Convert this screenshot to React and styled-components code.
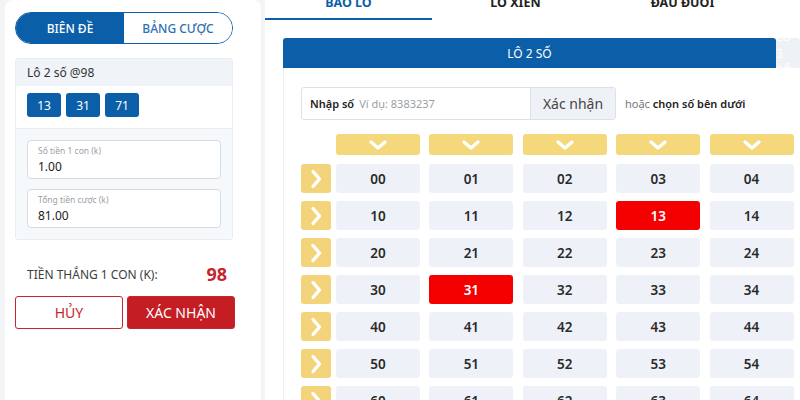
import React from "react";
import styled, { createGlobalStyle } from "styled-components";

const GlobalStyle = createGlobalStyle`
  html, body {
    margin: 0;
    padding: 0;
    background: #f3f4f6;
    font-family: "Noto Sans", "Open Sans", sans-serif;
    overflow: hidden;
  }
`;

/* PAGE */
const Page = styled.div`
  display: flex;
  gap: 4px;
  width: 800px;
  height: 400px;
  padding-left: 5px;
  box-sizing: border-box;
  overflow: hidden;
`;

/* LEFT CARD */
const SideCard = styled.div`
  width: 256px;
  flex: none;
  background: #fff;
  border-radius: 8px 8px 0 0;
  padding: 12px 28px 0 10px;
  box-sizing: border-box;
`;

const Toggle = styled.div`
  display: flex;
  height: 32px;
  border: 1px solid #0b5ea8;
  border-radius: 16px;
  overflow: hidden;
  box-sizing: border-box;
`;

const ToggleItem = styled.div`
  flex: 1;
  display: flex;
  align-items: center;
  justify-content: center;
  font-size: 12px;
  font-weight: 500;
  background: ${(p) => (p.$active ? "#0b5ea8" : "#fff")};
  color: ${(p) => (p.$active ? "#fff" : "#2f6fb0")};
`;

const BetBox = styled.div`
  margin-top: 14px;
  border: 1px solid #e9edf2;
  border-radius: 3px;
`;

const BetHead = styled.div`
  height: 27px;
  display: flex;
  align-items: center;
  padding-left: 11px;
  background: #f0f3f7;
  font-size: 12px;
  color: #333;
`;

const ChipRow = styled.div`
  display: flex;
  gap: 5px;
  padding: 7px 11px 11px;
  border-bottom: 1px solid #e9edf2;
`;

const Chip = styled.div`
  width: 34px;
  height: 24px;
  display: flex;
  align-items: center;
  justify-content: center;
  background: #0b5ea8;
  color: #fff;
  font-size: 12px;
  border-radius: 3px;
`;

const FieldArea = styled.div`
  background: #f6f9fc;
  padding: 11px 11px 11px;
  display: flex;
  flex-direction: column;
  gap: 10px;
`;

const Field = styled.div`
  height: 39px;
  background: #fff;
  border: 1px solid #d7dce3;
  border-radius: 4px;
  padding: 4px 10px 0;
  box-sizing: border-box;
`;

const FieldLabel = styled.div`
  font-size: 8.5px;
  color: #9aa0a8;
  line-height: 11px;
`;

const FieldValue = styled.div`
  font-size: 12px;
  color: #222;
  line-height: 18px;
  margin-top: 2px;
`;

const WinRow = styled.div`
  display: flex;
  justify-content: space-between;
  align-items: center;
  padding: 0 6px 0 12px;
  margin-top: 23px;
  height: 22px;
`;

const WinLabel = styled.div`
  font-size: 12px;
  color: #3c3c3c;
`;

const WinValue = styled.div`
  font-size: 18px;
  font-weight: 700;
  color: #c1272d;
`;

const ButtonRow = styled.div`
  display: flex;
  gap: 4px;
  margin-top: 11px;
  margin-right: -2px;
`;

const ActionButton = styled.button`
  flex: 1;
  height: 33px;
  border-radius: 3px;
  font-family: inherit;
  font-size: 14px;
  border: 1px solid #c1272d;
  background: ${(p) => (p.$primary ? "#c41e24" : "#fff")};
  color: ${(p) => (p.$primary ? "#fff" : "#c1272d")};
`;

/* RIGHT CARD */
const MainCard = styled.div`
  flex: 1;
  background: #fff;
  overflow: hidden;
`;

const TabBar = styled.div`
  display: flex;
  height: 20px;
`;

const Tab = styled.div`
  width: 167px;
  flex: none;
  display: flex;
  align-items: flex-end;
  justify-content: center;
  padding-bottom: 9px;
  box-sizing: border-box;
  font-size: 12.5px;
  font-weight: 700;
  line-height: 13px;
  color: ${(p) => (p.$active ? "#0b5ea8" : "#222")};
  border-bottom: 2px solid ${(p) => (p.$active ? "#0b5ea8" : "transparent")};
`;

const Board = styled.div`
  margin: 18px 0 0 18px;
`;

const SubTabs = styled.div`
  display: flex;
  height: 30px;
`;

const SubTab = styled.div`
  width: ${(p) => (p.$active ? "493px" : "auto")};
  flex: ${(p) => (p.$active ? "none" : "1")};
  display: flex;
  align-items: center;
  justify-content: center;
  font-size: 12px;
  border-radius: 3px 3px 0 0;
  background: ${(p) => (p.$active ? "#0b5ea8" : "#eef1f6")};
  color: #fff;
`;

const BoardBody = styled.div`
  border-left: 1px solid #eceef2;
  padding: 19px 0 0 17px;
`;

const InputRow = styled.div`
  display: flex;
  align-items: center;
  gap: 9px;
`;

const InputGroup = styled.div`
  width: 315px;
  height: 33px;
  display: flex;
  border: 1px solid #dde1e7;
  border-radius: 3px;
  box-sizing: border-box;
  overflow: hidden;
`;

const InputText = styled.div`
  flex: 1;
  display: flex;
  align-items: center;
  gap: 5px;
  padding-left: 8px;
  font-size: 11px;
`;

const InputLabel = styled.span`
  color: #222;
  font-weight: 600;
`;

const Placeholder = styled.span`
  color: #9a9fa6;
`;

const InputButton = styled.div`
  width: 84px;
  display: flex;
  align-items: center;
  justify-content: center;
  background: #eef1f6;
  border-left: 1px solid #dde1e7;
  font-size: 14px;
  color: #444;
`;

const Hint = styled.div`
  font-size: 11px;
  color: #222;
  font-weight: 600;

  span {
    color: #777;
    font-weight: 400;
  }
`;

/* first track is narrower than the arrow, so the arrow runs into the gap */
const NumberGrid = styled.div`
  display: grid;
  grid-template-columns: 25.6px repeat(5, 84px);
  column-gap: 9.4px;
  row-gap: 8px;
  margin-top: 14px;
`;

const ColArrow = styled.div`
  height: 21px;
  background: #f5d77c;
  border-radius: 3px;
  display: flex;
  align-items: center;
  justify-content: center;
  margin-bottom: 1px;
`;

const RowArrow = styled.div`
  width: 30px;
  height: 29px;
  background: #f3d47a;
  border-radius: 3px;
  display: flex;
  align-items: center;
  justify-content: center;
`;

const Cell = styled.div`
  height: 29px;
  border-radius: 3px;
  display: flex;
  align-items: center;
  justify-content: center;
  font-size: 13.5px;
  font-weight: 600;
  background: ${(p) => (p.$on ? "#f50000" : "#eef2f8")};
  color: ${(p) => (p.$on ? "#fff" : "#2a2a2a")};
`;

const Chevron = ({ dir }) =>
  dir === "down" ? (
    <svg width="22" height="14" viewBox="0 0 22 14" fill="none" stroke="#fff" strokeWidth="3.4" strokeLinecap="round" strokeLinejoin="round">
      <path d="M4 4l7 6 7-6" />
    </svg>
  ) : (
    <svg width="14" height="22" viewBox="0 0 14 22" fill="none" stroke="#fff" strokeWidth="3.4" strokeLinecap="round" strokeLinejoin="round">
      <path d="M4 3.5l6.5 7.5-6.5 7.5" />
    </svg>
  );

const selected = ["13", "31"];

export default function App() {
  const rows = [0, 1, 2, 3, 4, 5, 6, 7];
  return (
    <>
      <GlobalStyle />
      <Page>
        <SideCard>
          <Toggle>
            <ToggleItem $active>BIÊN ĐỀ</ToggleItem>
            <ToggleItem>BẢNG CƯỢC</ToggleItem>
          </Toggle>
          <BetBox>
            <BetHead>Lô 2 số @98</BetHead>
            <ChipRow>
              <Chip>13</Chip>
              <Chip>31</Chip>
              <Chip>71</Chip>
            </ChipRow>
            <FieldArea>
              <Field>
                <FieldLabel>Số tiền 1 con (k)</FieldLabel>
                <FieldValue>1.00</FieldValue>
              </Field>
              <Field>
                <FieldLabel>Tổng tiền cược (k)</FieldLabel>
                <FieldValue>81.00</FieldValue>
              </Field>
            </FieldArea>
          </BetBox>
          <WinRow>
            <WinLabel>TIỀN THẮNG 1 CON (K):</WinLabel>
            <WinValue>98</WinValue>
          </WinRow>
          <ButtonRow>
            <ActionButton>HỦY</ActionButton>
            <ActionButton $primary>XÁC NHẬN</ActionButton>
          </ButtonRow>
        </SideCard>

        <MainCard>
          <TabBar>
            <Tab $active>BAO LÔ</Tab>
            <Tab>LÔ XIÊN</Tab>
            <Tab>ĐẦU ĐUÔI</Tab>
          </TabBar>
          <Board>
            <SubTabs>
              <SubTab $active>LÔ 2 SỐ</SubTab>
              <SubTab>LÔ 3 SỐ</SubTab>
            </SubTabs>
            <BoardBody>
              <InputRow>
                <InputGroup>
                  <InputText>
                    <InputLabel>Nhập số</InputLabel>
                    <Placeholder>Ví dụ: 8383237</Placeholder>
                  </InputText>
                  <InputButton>Xác nhận</InputButton>
                </InputGroup>
                <Hint>
                  <span>hoặc</span> chọn số bên dưới
                </Hint>
              </InputRow>
              <NumberGrid>
                <div />
                {[0, 1, 2, 3, 4].map((c) => (
                  <ColArrow key={"c" + c}>
                    <Chevron dir="down" />
                  </ColArrow>
                ))}
                {rows.map((r) => (
                  <React.Fragment key={r}>
                    <RowArrow>
                      <Chevron dir="right" />
                    </RowArrow>
                    {[0, 1, 2, 3, 4].map((c) => {
                      const n = `${r}${c}`;
                      return (
                        <Cell key={n} $on={selected.includes(n)}>
                          {n}
                        </Cell>
                      );
                    })}
                  </React.Fragment>
                ))}
              </NumberGrid>
            </BoardBody>
          </Board>
        </MainCard>
      </Page>
    </>
  );
}
